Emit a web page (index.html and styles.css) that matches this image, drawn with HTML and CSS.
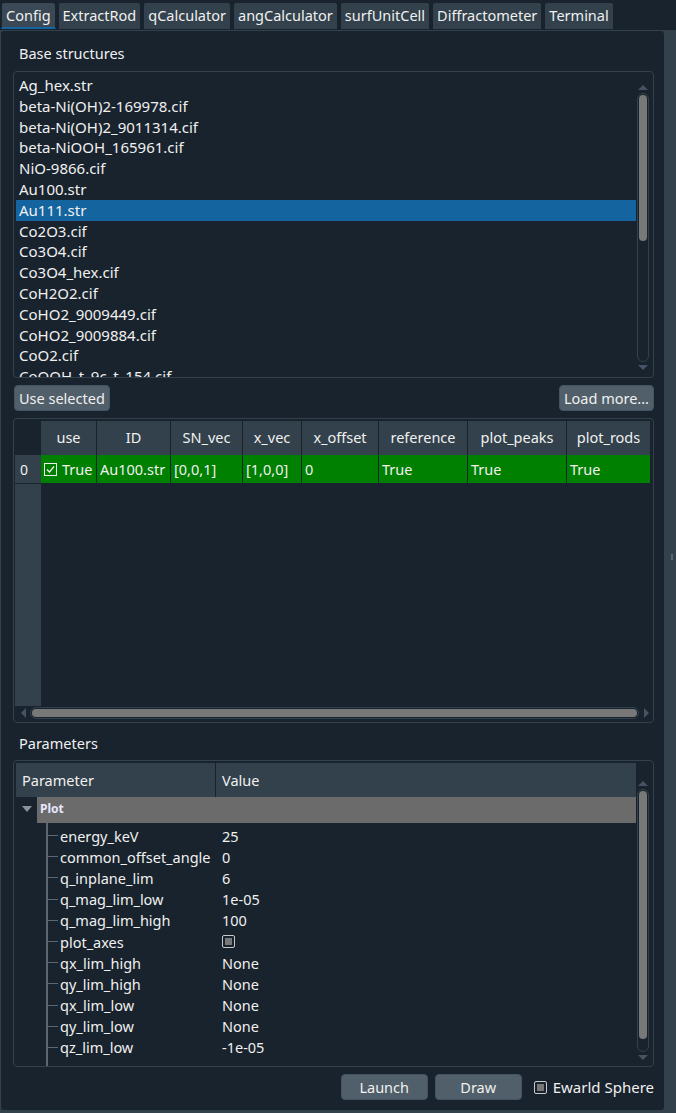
FILE: index.html
```html
<!DOCTYPE html>
<html>
<head>
<meta charset="utf-8">
<link rel="stylesheet" href="styles.css">
</head>
<body>
<div class="window">
  <div class="tabbar">
    <div class="tab active">Config</div>
    <div class="tab">ExtractRod</div>
    <div class="tab">qCalculator</div>
    <div class="tab">angCalculator</div>
    <div class="tab">surfUnitCell</div>
    <div class="tab">Diffractometer</div>
    <div class="tab">Terminal</div>
  </div>
  <div class="body-row">
    <div class="pane">
      <div class="label">Base structures</div>
      <div class="listbox">
        <div class="list-items">
          <div class="item">Ag_hex.str</div>
          <div class="item">beta-Ni(OH)2-169978.cif</div>
          <div class="item">beta-Ni(OH)2_9011314.cif</div>
          <div class="item">beta-NiOOH_165961.cif</div>
          <div class="item">NiO-9866.cif</div>
          <div class="item">Au100.str</div>
          <div class="item selected">Au111.str</div>
          <div class="item">Co2O3.cif</div>
          <div class="item">Co3O4.cif</div>
          <div class="item">Co3O4_hex.cif</div>
          <div class="item">CoH2O2.cif</div>
          <div class="item">CoHO2_9009449.cif</div>
          <div class="item">CoHO2_9009884.cif</div>
          <div class="item">CoO2.cif</div>
          <div class="item">CoOOH_t_9c_t_154.cif</div>
        </div>
        <div class="vscroll list-scroll">
          <div class="arrow up"></div>
          <div class="track"><div class="thumb" style="height:146px"></div></div>
          <div class="arrow down"></div>
        </div>
      </div>
      <div class="btn-row">
        <button class="btn">Use selected</button>
        <button class="btn">Load more...</button>
      </div>
      <div class="tablebox">
        <div class="table-main">
          <div class="vheader">
            <div class="corner"></div>
            <div class="vcell">0</div>
          </div>
          <div class="grid">
            <div class="hrow">
              <div class="hcell c-use">use</div>
              <div class="hcell c-id">ID</div>
              <div class="hcell c-sn">SN_vec</div>
              <div class="hcell c-xv">x_vec</div>
              <div class="hcell c-xo">x_offset</div>
              <div class="hcell c-ref">reference</div>
              <div class="hcell c-pp">plot_peaks</div>
              <div class="hcell c-pr">plot_rods</div>
            </div>
            <div class="drow">
              <div class="dcell c-use"><svg class="chk" width="13" height="13" viewBox="0 0 13 13"><rect x="0.5" y="0.5" width="12" height="12" fill="none" stroke="#f0f0f0" stroke-width="1"/><path d="M3 6.5 L5.5 9 L10 3.5" fill="none" stroke="#f0f0f0" stroke-width="1.3"/></svg>True</div>
              <div class="dcell c-id">Au100.str</div>
              <div class="dcell c-sn">[0,0,1]</div>
              <div class="dcell c-xv">[1,0,0]</div>
              <div class="dcell c-xo">0</div>
              <div class="dcell c-ref">True</div>
              <div class="dcell c-pp">True</div>
              <div class="dcell c-pr">True</div>
            </div>
          </div>
        </div>
        <div class="hscroll">
          <div class="arrow left"></div>
          <div class="htrack"><div class="hthumb"></div></div>
          <div class="arrow right"></div>
        </div>
      </div>
      <div class="label params">Parameters</div>
      <div class="treebox">
        <div class="tree-main">
          <div class="thead">
            <div class="th th-param">Parameter</div>
            <div class="th th-val">Value</div>
          </div>
          <div class="group">
            <div class="expander"><svg width="10" height="6" viewBox="0 0 10 6"><path d="M0 0 L10 0 L5 6 Z" fill="#8a9199"/></svg></div>
            <div class="group-label">Plot</div>
          </div>
          <div class="children">
            <div class="trow"><span class="tk"></span><span class="pn">energy_keV</span><span class="pv">25</span></div>
            <div class="trow"><span class="tk"></span><span class="pn">common_offset_angle</span><span class="pv">0</span></div>
            <div class="trow"><span class="tk"></span><span class="pn">q_inplane_lim</span><span class="pv">6</span></div>
            <div class="trow"><span class="tk"></span><span class="pn">q_mag_lim_low</span><span class="pv">1e-05</span></div>
            <div class="trow"><span class="tk"></span><span class="pn">q_mag_lim_high</span><span class="pv">100</span></div>
            <div class="trow"><span class="tk"></span><span class="pn">plot_axes</span><span class="pv"><span class="box"></span></span></div>
            <div class="trow"><span class="tk"></span><span class="pn">qx_lim_high</span><span class="pv">None</span></div>
            <div class="trow"><span class="tk"></span><span class="pn">qy_lim_high</span><span class="pv">None</span></div>
            <div class="trow"><span class="tk"></span><span class="pn">qx_lim_low</span><span class="pv">None</span></div>
            <div class="trow"><span class="tk"></span><span class="pn">qy_lim_low</span><span class="pv">None</span></div>
            <div class="trow last"><span class="tk"></span><span class="pn">qz_lim_low</span><span class="pv">-1e-05</span></div>
          </div>
        </div>
        <div class="vscroll tree-scroll">
          <div class="arrow up"></div>
          <div class="track"><div class="thumb" style="height:248px"></div></div>
          <div class="arrow down"></div>
        </div>
      </div>
      <div class="bottom-row">
        <button class="btn wide">Launch</button>
        <button class="btn wide">Draw</button>
        <label class="check"><span class="box"></span>Ewarld Sphere</label>
      </div>
    </div>
    <div class="side"><div class="handle"></div></div>
  </div>
</div>
</body>
</html>
```

FILE: styles.css
```css
* { box-sizing: border-box; }
html, body {
  margin: 0;
  padding: 0;
  width: 676px;
  height: 1113px;
  overflow: hidden;
  background: #32414b;
  font-family: "Noto Sans", "Open Sans", sans-serif;
  font-size: 14px;
  color: #f0f0f0;
}
.window {
  display: flex;
  flex-direction: column;
  height: 1113px;
}
.tabbar {
  display: flex;
  gap: 2px;
  height: 30px;
  padding: 2px 0 0 1px;
  background: #19232d;
}
.tab {
  height: 27px;
  padding: 0 4px;
  background: #32414b;
  border: 1px solid #19232d;
  border-bottom: none;
  border-radius: 3px 3px 0 0;
  line-height: 25px;
  font-size: 14.5px;
  color: #f0f0f0;
}
.tab.active {
  background: #3a4955;
  border-bottom: 2px solid #1464a0;
}
.body-row {
  display: flex;
  flex: 1;
}
.pane {
  width: 665px;
  height: 1081px;
  background: #19232d;
  border: 1px solid #32414b;
  border-radius: 4px;
  padding: 0 10px 0 12px;
  display: flex;
  flex-direction: column;
}
.side {
  flex: 1;
  background: #32414b;
  position: relative;
}
.handle {
  position: absolute;
  left: 6px;
  top: 524px;
  width: 2px;
  height: 6px;
  background: #5a6874;
}
.label {
  height: 40px;
  line-height: 44px;
  padding-left: 6px;
  font-size: 14.5px;
}
.listbox {
  height: 307px;
  border: 1px solid #32414b;
  border-radius: 4px;
  display: flex;
  overflow: hidden;
  padding: 2px 4px 0 2px;
}
.list-items {
  flex: 1;
  overflow: hidden;
  padding-top: 1px;
}
.item {
  height: 20.8px;
  line-height: 20.8px;
  padding-left: 3px;
  white-space: nowrap;
  font-size: 15px;
}
.item.selected {
  background: #1464a0;
}
.vscroll {
  width: 12px;
  display: flex;
  flex-direction: column;
  align-items: center;
  margin-left: 1px;
}
.arrow.up, .arrow.down {
  width: 0; height: 0;
  border-left: 5px solid transparent;
  border-right: 5px solid transparent;
  margin: 3px 0;
}
.arrow.up { border-bottom: 5px solid #455364; }
.arrow.down { border-top: 5px solid #455364; }
.track {
  flex: 1;
  width: 12px;
  border: 1px solid #32414b;
  border-radius: 6px;
  padding: 1px;
}
.thumb {
  width: 8px;
  background: #787878;
  border-radius: 4px;
}
.list-scroll { padding-top: 8px; padding-bottom: 4px; }
.btn-row {
  display: flex;
  justify-content: space-between;
  padding: 7px 0 0 1px;
  height: 40px;
}
.btn {
  height: 26px;
  padding: 0 4px;
  background: #505f69;
  border: 1px solid #455364;
  border-radius: 4px;
  color: #f0f0f0;
  font-family: inherit;
  font-size: 14.5px;
  line-height: 22px;
}
.tablebox {
  height: 305px;
  border: 1px solid #32414b;
  border-radius: 4px;
  padding: 2px 1px 0 1px;
  display: flex;
  flex-direction: column;
}
.table-main {
  flex: 1;
  display: flex;
  overflow: hidden;
}
.vheader {
  width: 26px;
  background: #32414b;
}
.corner { height: 34px; background: #19232d; }
.vcell {
  height: 29px;
  line-height: 29px;
  padding-left: 5px;
  border-bottom: 1px solid #19232d;
}
.grid { flex: 1; }
.hrow, .drow { display: flex; }
.hrow { height: 34px; }
.hcell {
  background: #32414b;
  border-right: 1px solid #19232d;
  text-align: center;
  line-height: 32px;
  font-size: 14.5px;
}
.drow { height: 29px; background: #19232d; }
.dcell {
  background: #008000;
  border-right: 1px solid #19232d;
  border-bottom: 1px solid #19232d;
  line-height: 27px;
  padding-left: 3px;
  font-size: 14.5px;
  white-space: nowrap;
  display: flex;
  align-items: center;
}
.chk { margin: 0 5px 0 0; }
.c-use { width: 56px; }
.c-id { width: 74px; }
.c-sn { width: 72px; }
.c-xv { width: 59px; }
.c-xo { width: 77px; }
.c-ref { width: 89px; }
.c-pp { width: 99px; }
.c-pr { width: 84px; }
.dcell.c-use { padding-left: 3px; }
.hscroll {
  height: 16px;
  display: flex;
  align-items: center;
  padding: 0 3px 2px 6px;
}
.arrow.left, .arrow.right {
  width: 0; height: 0;
  border-top: 5px solid transparent;
  border-bottom: 5px solid transparent;
}
.arrow.left { border-right: 5px solid #455364; margin-right: 4px; }
.arrow.right { border-left: 5px solid #455364; margin-left: 5px; }
.htrack {
  flex: 1;
  height: 12px;
  border: 1px solid #32414b;
  border-radius: 6px;
  padding: 1px;
}
.hthumb {
  height: 8px;
  background: #787878;
  border-radius: 4px;
  width: 100%;
}
.params { height: 37px; line-height: 40px; }
.treebox {
  height: 307px;
  border: 1px solid #32414b;
  border-radius: 4px;
  display: flex;
  padding: 2px 4px 0 2px;
}
.tree-main { flex: 1; overflow: hidden; }
.thead {
  display: flex;
  height: 34px;
  background: #32414b;
}
.th {
  line-height: 34px;
  padding-left: 6px;
  font-size: 14.5px;
}
.th-param { width: 200px; border-right: 1px solid #19232d; }
.group {
  display: flex;
  height: 26px;
}
.expander {
  width: 21px;
  display: flex;
  align-items: center;
  justify-content: center;
  padding-bottom: 2px;
}
.group-label {
  flex: 1;
  background: #6b6b6b;
  font-weight: bold;
  font-size: 12px;
  color: #e6e6ff;
  line-height: 24px;
  padding-left: 3px;
}
.children {
  margin-left: 30px;
  padding-top: 2px;
  border-left: 2px solid #5d6770;
  height: 244px;
}
.trow {
  display: flex;
  align-items: center;
  height: 21.2px;
  font-size: 14.5px;
}
.tk {
  width: 10px;
  height: 1px;
  background: #5d6770;
  margin-right: 2px;
}
.pn { width: 162px; white-space: nowrap; }
.pv { display: flex; align-items: center; }
.box {
  display: inline-block;
  width: 13px;
  height: 13px;
  border: 1px solid #c8c8c8;
  border-radius: 2px;
  background: #19232d;
  padding: 2px;
  position: relative;
}
.box::after {
  content: "";
  display: block;
  width: 7px;
  height: 7px;
  background: #787878;
}
.tree-scroll { padding-top: 15px; padding-bottom: 3px; }
.bottom-row {
  display: flex;
  justify-content: flex-end;
  align-items: center;
  gap: 7px;
  padding: 7px 0 0 0;
}
.btn.wide { width: 87px; }
.check {
  display: flex;
  align-items: center;
  gap: 6px;
  margin-left: 5px;
  font-size: 15px;
}
```
